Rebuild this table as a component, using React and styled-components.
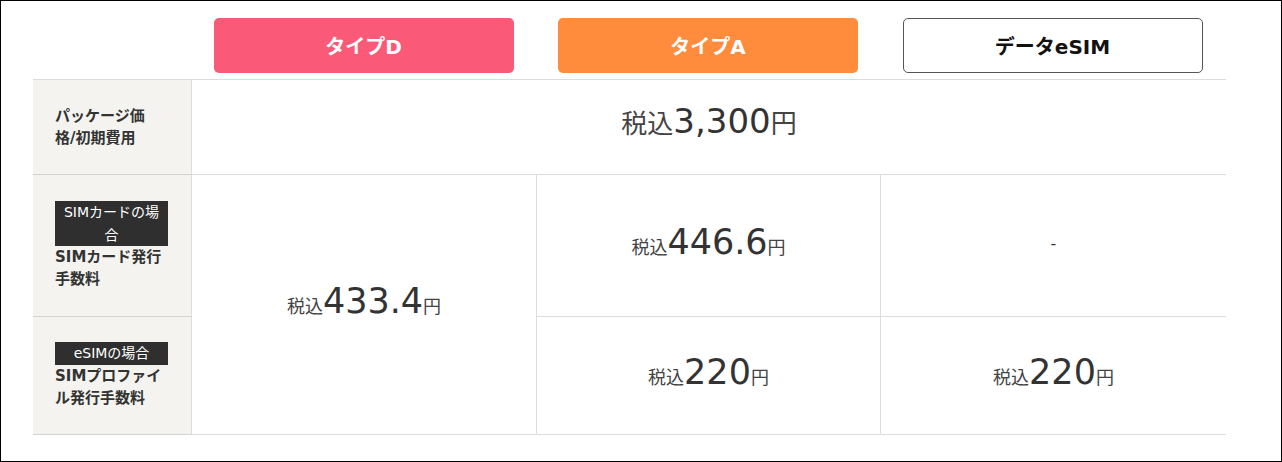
import React from 'react';
import styled, { createGlobalStyle, css } from 'styled-components';

const GlobalStyle = createGlobalStyle`
  html, body {
    margin: 0;
    padding: 0;
    background: #fff;
  }
  body {
    font-family: "DejaVu Sans", "Noto Sans CJK JP", sans-serif;
    color: #333;
  }
`;

const Frame = styled.div`
  width: 1282px;
  height: 462px;
  box-sizing: border-box;
  border: 1px solid #000;
  background: #fff;
  padding-left: 32px;
`;

const PriceTable = styled.div`
  display: grid;
  grid-template-columns: 159px 345px 344px 345px;
  grid-template-rows: 79px 95px 142px 118px;
`;

const HeaderCell = styled.div`
  border-bottom: 1px solid #dcdcdc;
  box-sizing: border-box;
  display: flex;
  justify-content: center;
  padding: 17px 2px 0 0;
`;

const tones = {
  pink: css`
    background: #fa5a78;
    color: #fff;
    border: none;
  `,
  orange: css`
    background: #ff8b3d;
    color: #fff;
    border: none;
  `,
  outline: css`
    background: #fff;
    color: #111;
    border: 1px solid #555;
  `,
};

const PlanButton = styled.div`
  width: 300px;
  height: 55px;
  box-sizing: border-box;
  border-radius: 5px;
  display: flex;
  align-items: center;
  justify-content: center;
  font-family: "DejaVu Sans", "Noto Sans CJK JP", sans-serif;
  font-size: 20px;
  font-weight: 700;
  ${props => tones[props.$tone]}
`;

const LabelCell = styled.div`
  background: #f4f3ef;
  border-right: 1px solid #dcdcdc;
  border-bottom: 1px solid #d2d2d2;
  box-sizing: border-box;
  padding: 0 23px 0 22px;
  display: flex;
  flex-direction: column;
  justify-content: center;
`;

const Badge = styled.div`
  background: #2f2f2f;
  color: #fff;
  font-size: 14px;
  line-height: 22.5px;
  text-align: center;
  padding: 0 6px;
`;

const LabelText = styled.div`
  font-size: 15px;
  font-weight: 700;
  line-height: 22px;
  color: #333;
  white-space: nowrap;
`;

const PriceCell = styled.div`
  box-sizing: border-box;
  border-bottom: 1px solid #dcdcdc;
  border-right: ${props => (props.$end ? 'none' : '1px solid #dcdcdc')};
  grid-column: ${props => props.$cols || 'auto'};
  grid-row: ${props => props.$rows || 'auto'};
  display: flex;
  align-items: center;
  justify-content: center;
  color: #333;
`;

const Price = styled.div`
  display: flex;
  align-items: baseline;
  padding-bottom: ${props => (props.$big ? 12 : 8)}px;
`;

const Unit = styled.span`
  font-family: "Noto Sans CJK JP", sans-serif;
  font-size: ${props => (props.$big ? 26 : 18)}px;
  color: #444;
`;

const Amount = styled.span`
  font-family: "DejaVu Sans", sans-serif;
  font-size: ${props => (props.$big ? 34 : 35)}px;
  color: #333;
  line-height: 1.2;
`;

const Dash = styled.span`
  font-family: "DejaVu Sans", sans-serif;
  font-size: 16px;
  color: #333;
  padding-bottom: 4px;
`;

const plans = [
  { name: 'タイプD', tone: 'pink' },
  { name: 'タイプA', tone: 'orange' },
  { name: 'データeSIM', tone: 'outline' },
];

const Tax = ({ value, big }) => (
  <Price $big={big}>
    <Unit $big={big}>税込</Unit>
    <Amount $big={big}>{value}</Amount>
    <Unit $big={big}>円</Unit>
  </Price>
);

const App = () => {
  return (
    <>
      <GlobalStyle />
      <Frame>
        <PriceTable>
          <HeaderCell />
          {plans.map(p => (
            <HeaderCell key={p.name}>
              <PlanButton $tone={p.tone}>{p.name}</PlanButton>
            </HeaderCell>
          ))}

          <LabelCell>
            <LabelText>
              パッケージ価
              <br />
              格/初期費用
            </LabelText>
          </LabelCell>
          <PriceCell $cols="2 / 5" $end>
            <Tax value="3,300" big />
          </PriceCell>

          <LabelCell>
            <Badge>SIMカードの場合</Badge>
            <LabelText>
              SIMカード発行
              <br />
              手数料
            </LabelText>
          </LabelCell>
          <PriceCell $cols="2" $rows="3 / 5">
            <Tax value="433.4" />
          </PriceCell>
          <PriceCell>
            <Tax value="446.6" />
          </PriceCell>
          <PriceCell $end>
            <Dash>-</Dash>
          </PriceCell>

          <LabelCell>
            <Badge>eSIMの場合</Badge>
            <LabelText>
              SIMプロファイ
              <br />
              ル発行手数料
            </LabelText>
          </LabelCell>
          <PriceCell>
            <Tax value="220" />
          </PriceCell>
          <PriceCell $end>
            <Tax value="220" />
          </PriceCell>
        </PriceTable>
      </Frame>
    </>
  );
};

export default App;
